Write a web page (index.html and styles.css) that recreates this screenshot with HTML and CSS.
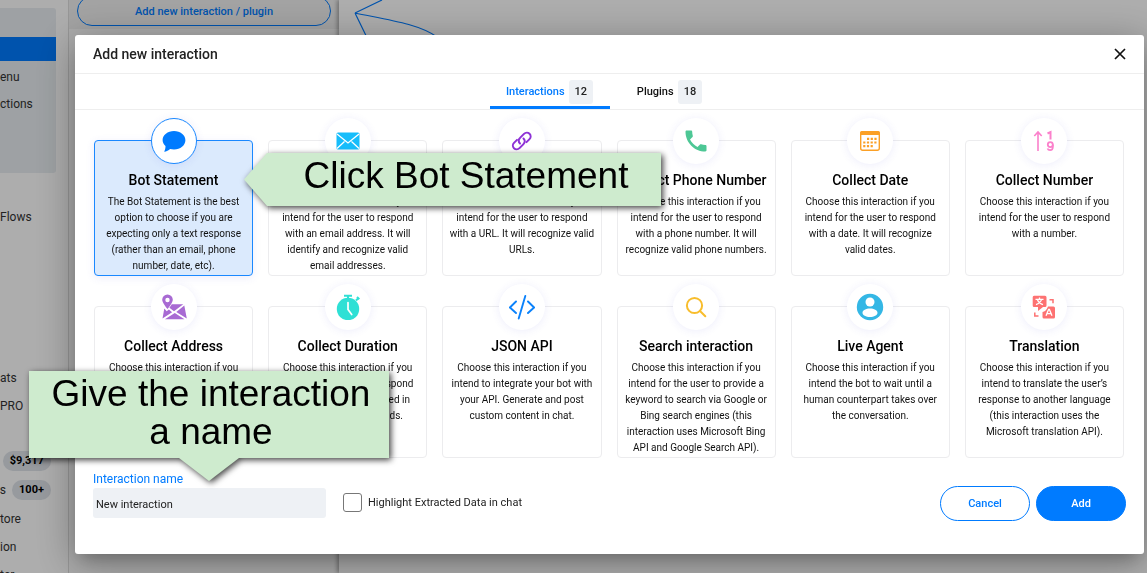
FILE: index.html
```html
<!DOCTYPE html>
<html lang="en">
<head>
<meta charset="utf-8">
<title>Add new interaction</title>
<link rel="stylesheet" href="styles.css">
</head>
<body>
<div class="app">
  <nav class="sidebar">
    <ul class="group">
      <li class="item active"></li>
      <li class="item">enu</li>
      <li class="item">ctions</li>
    </ul>
    <ul class="menu menu-flows"><li class="item">Flows</li></ul>
    <ul class="menu menu-account">
      <li class="item">ats</li>
      <li class="item">PRO</li>
    </ul>
    <ul class="menu menu-stats">
      <li class="item stat"><span class="pill">$9,317</span></li>
      <li class="item stat">s<span class="pill">100+</span></li>
      <li class="item">tore</li>
      <li class="item">ion</li>
      <li class="item">ter</li>
    </ul>
  </nav>
  <section class="panel">
    <div class="panel-head"><button class="panel-button" type="button">Add new interaction / plugin</button></div>
  </section>
  <main class="canvas">
    <svg class="links" width="120" height="60" viewBox="0 0 120 60" fill="none" stroke="#007bff" stroke-width="1.2"><path d="M16 13 43 0M16 13C50 20 80 24 98 37M16 13 34 50"/></svg>
  </main>
</div>

<div class="backdrop">
  <div class="modal" role="dialog" aria-labelledby="modal-title">
    <header class="modal-head">
      <h1 class="modal-title" id="modal-title">Add new interaction</h1>
      <button class="close" type="button" aria-label="Close"><svg width="12" height="12" viewBox="0 0 12 12" stroke="#111" stroke-width="1.7"><path d="M1 1l10 10M11 1L1 11"/></svg></button>
    </header>
    <div class="tabs" role="tablist">
      <button class="tab selected" type="button" role="tab" aria-selected="true">Interactions <span class="count">12</span></button>
      <button class="tab" type="button" role="tab" aria-selected="false">Plugins <span class="count">18</span></button>
    </div>
    <div class="cards">
      <button class="card chosen" type="button">
        <span class="bubble"><svg width="24" height="24" viewBox="0 0 24 24"><path fill="#007bff" d="M12 2C5.700 2 .6 6 .6 11c0 2.400 1.100 4.500 2.900 6.100 0 2-.4 3.900-1.300 5.600 2.300-.2 4.400-1.100 5.900-2.700 1.200.3 2.500.5 3.900.5 6.300 0 11.400-4.200 11.400-9.300S18.300 2 12 2z"/></svg></span>
        <span class="card-title">Bot Statement</span>
        <span class="card-text">The Bot Statement is the best option to choose if you are expecting only a text response (rather than an email, phone number, date, etc).</span>
      </button>
      <button class="card" type="button">
        <span class="bubble"><svg width="24" height="24" viewBox="0 0 24 24"><rect x=".5" y="3.500" width="23" height="17" rx="1.500" fill="#16bdfb"/><path d="M1 5l11 9 11-9M1 19.500l7.500-7M23 19.500l-7.500-7" fill="none" stroke="#fff" stroke-width="1.300"/></svg></span>
        <span class="card-title">Collect Email</span>
        <span class="card-text">Choose this interaction if you intend for the user to respond with an email address. It will identify and recognize valid email addresses.</span>
      </button>
      <button class="card" type="button">
        <span class="bubble"><svg width="24" height="24" viewBox="0 0 24 24" fill="none" stroke="#8e32d6" stroke-width="2" stroke-linecap="round"><path d="M10 14.500c-1.700-1.700-1.700-4 0-5.600l4-4c1.600-1.600 4-1.600 5.500-.2 1.500 1.500 1.500 3.900 0 5.400l-3 3"/><path d="M13.500 9.500c1.700 1.700 1.700 4 0 5.600l-4 4c-1.600 1.600-4 1.600-5.500.2-1.500-1.500-1.500-3.900 0-5.400l3-3"/></svg></span>
        <span class="card-title">Collect URL</span>
        <span class="card-text">Choose this interaction if you intend for the user to respond with a URL. It will recognize valid URLs.</span>
      </button>
      <button class="card" type="button">
        <span class="bubble"><svg width="24" height="24" viewBox="0 0 24 24"><path fill="#4dc795" d="M6 10.500c1.600 3.200 4.300 5.800 7.500 7.500l2.500-2.500c.3-.3.8-.4 1.200-.2 1.300.4 2.700.6 4.100.6.7 0 1.200.5 1.200 1.200v4.200c0 .7-.5 1.200-1.200 1.200C10.500 22.500 1.500 13.600 1.500 2.700c0-.7.500-1.200 1.200-1.200H7c.7 0 1.200.5 1.200 1.200 0 1.400.2 2.800.6 4.100.1.400 0 .9-.3 1.200z"/></svg></span>
        <span class="card-title">Collect Phone Number</span>
        <span class="card-text">Choose this interaction if you intend for the user to respond with a phone number. It will recognize valid phone numbers.</span>
      </button>
      <button class="card" type="button">
        <span class="bubble"><svg width="24" height="24" viewBox="0 0 24 24"><rect x="2.700" y="2.700" width="18.600" height="18.600" rx="2" fill="none" stroke="#fba026" stroke-width="1.400"/><path d="M2 6V4q0-2 2-2h16q2 0 2 2v2z" fill="#fba026"/><path d="M9 9.800h11M5.200 13.500H20M5.200 17.200h11" stroke="#fba026" stroke-width="2.200" stroke-dasharray="2.200 1.500"/></svg></span>
        <span class="card-title">Collect Date</span>
        <span class="card-text">Choose this interaction if you intend for the user to respond with a date. It will recognize valid dates.</span>
      </button>
      <button class="card" type="button">
        <span class="bubble"><svg width="24" height="24" viewBox="0 0 24 24" fill="none" stroke="#fb80cb"><path d="M6 22V3M2.300 7 6 3l3.700 4" stroke-width="1.600"/><path d="M15.500 4.500 18.500 3v7.500" stroke-width="2"/><circle cx="18.300" cy="15.600" r="2.500" stroke-width="1.800"/><path d="M20.900 15.600v2.200c0 2.200-1.200 3.400-2.800 3.400-1.300 0-2.200-.6-2.600-1.700" stroke-width="1.700"/></svg></span>
        <span class="card-title">Collect Number</span>
        <span class="card-text">Choose this interaction if you intend for the user to respond with a number.</span>
      </button>
      <button class="card" type="button">
        <span class="bubble"><svg width="26" height="26" viewBox="0 0 26 26" fill="#a86ad3"><path fill-rule="evenodd" d="M6.500.5a5.300 5.300 0 0 1 5.300 5.300c0 3.300-5.300 9.200-5.300 9.200S1.200 9.100 1.200 5.800A5.300 5.300 0 0 1 6.500.5zm0 3.300a2.200 2.200 0 1 0 0 4.400 2.200 2.200 0 0 0 0-4.400z"/><path d="M10.800 10.300h11.500l-9.300 7-4.600-3.500zM3.300 14.500l2.400 2.700 2.200-1.700 3.200 2.800-9.600 6.200zM23.300 11.500l2.500 13-10.500-6.500zM13.800 19l9.700 6.300H3.900z"/></svg></span>
        <span class="card-title">Collect Address</span>
        <span class="card-text">Choose this interaction if you intend for the user to respond with an address. It will recognize valid addresses.</span>
      </button>
      <button class="card" type="button">
        <span class="bubble"><svg width="26" height="26" viewBox="0 0 26 26"><circle cx="13" cy="15" r="11.200" fill="#2ee0d5"/><path d="M9 1.700h8M13 2v3M21 6.500l2.500-2.500M22 3l2.300 2.300" stroke="#2ee0d5" stroke-width="2"/><path d="M13 8.500v7l3.700 5" fill="none" stroke="#fff" stroke-width="1.700" stroke-linecap="round"/></svg></span>
        <span class="card-title">Collect Duration</span>
        <span class="card-text">Choose this interaction if you intend for the user to respond with a duration expressed in hours, minutes, seconds.</span>
      </button>
      <button class="card" type="button">
        <span class="bubble"><svg width="26" height="26" viewBox="0 0 26 26" fill="none" stroke="#0b82fb" stroke-width="1.900" stroke-linecap="round"><path d="M7 7.500.9 13.500 7 19M19 7.500l6.100 6L19 19M16.300 2 9.700 24.500"/></svg></span>
        <span class="card-title">JSON API</span>
        <span class="card-text">Choose this interaction if you intend to integrate your bot with your API. Generate and post custom content in chat.</span>
      </button>
      <button class="card" type="button">
        <span class="bubble"><svg width="24" height="24" viewBox="0 0 24 24" fill="none" stroke="#f8bd2c" stroke-width="2" stroke-linecap="round"><circle cx="10.500" cy="10.500" r="7.600"/><path d="M16 16l5.300 5.300"/></svg></span>
        <span class="card-title">Search interaction</span>
        <span class="card-text">Choose this interaction if you intend for the user to provide a keyword to search via Google or Bing search engines (this interaction uses Microsoft Bing API and Google Search API).</span>
      </button>
      <button class="card" type="button">
        <span class="bubble"><svg width="28" height="28" viewBox="0 0 28 28"><circle cx="14" cy="14" r="13.200" fill="#34b7e5"/><circle cx="14" cy="9" r="4.500" fill="#fff"/><path fill="#fff" d="M14 15.500c4 0 7.500 1.700 7.500 4.300S18 24 14 24s-7.500-1.600-7.500-4.200 3.500-4.300 7.500-4.300z"/></svg></span>
        <span class="card-title">Live Agent</span>
        <span class="card-text">Choose this interaction if you intend the bot to wait until a human counterpart takes over the conversation.</span>
      </button>
      <button class="card" type="button">
        <span class="bubble"><svg width="24" height="24" viewBox="0 0 24 24"><path fill="#fd7272" d="M2 .7h11q1.500 0 1.500 1.500v8.300q0 1.500-1.500 1.500h-2l-5 4v-4H2Q.7 12 .7 10.500V2.200Q.7.700 2 .7zM16 11.500h5.500q1.500 0 1.500 1.500v9q0 1.500-1.500 1.500H12q-1.500 0-1.500-1.500v-5q3.500-.5 5.500-5.500z"/><path d="M3.500 4.400h8M7.500 2.500v2M4 9.600c3-1 4.700-2.700 5.500-5M11 9.600C8.500 9 6.400 7.200 5.500 4.800" fill="none" stroke="#fff" stroke-width="1.300"/><path d="M14 20.700l2.600-6.200h.8l2.600 6.200M15 18.700h4" fill="none" stroke="#fff" stroke-width="1.300"/><path d="M17.500 4.700H21v3.500M2.800 17.500v3.500h3.700" fill="none" stroke="#fd7272" stroke-width="1.500"/></svg></span>
        <span class="card-title">Translation</span>
        <span class="card-text">Choose this interaction if you intend to translate the user’s response to another language (this interaction uses the Microsoft translation API).</span>
      </button>
    </div>
    <form class="modal-foot">
      <div class="field">
        <label class="field-label" for="name">Interaction name</label>
        <input class="field-input" id="name" type="text" value="New interaction">
      </div>
      <label class="check"><input class="check-box" type="checkbox">Highlight Extracted Data in chat</label>
      <div class="actions">
        <button class="btn btn-outline" type="button">Cancel</button>
        <button class="btn btn-solid" type="button">Add</button>
      </div>
    </form>
  </div>
</div>

<div class="callout callout-left">Click Bot Statement</div>
<div class="callout callout-down">Give the interaction a name</div>
</body>
</html>
```
FILE: styles.css
```css
* { box-sizing: border-box; }
body { margin: 0; height: 100vh; overflow: hidden; font-family: Roboto, sans-serif; font-size: 11px; color: #111; background: #fff; }
button, input { font: inherit; color: inherit; }
svg { display: block; }

.app { display: flex; height: 100vh; }
.sidebar { width: 69px; flex: none; padding-top: 8px; border-right: 1px solid #dedede; overflow: hidden; }
.group, .menu { list-style: none; margin: 0; padding: 0; }
.item { height: 28px; display: flex; align-items: center; font-size: 12px; color: #333; }
.group { width: 56px; height: 165px; padding-top: 29px; background: #e9eef2; border-radius: 0 3px 3px 0; }
.group .item { height: 27px; }
.group .active { height: 24px; background: #007bff; margin-bottom: 2px; }
.menu-flows { padding-top: 30px; }
.menu-account { padding-top: 133px; }
.menu-stats { padding-top: 27px; }
.stat { justify-content: flex-end; gap: 6px; width: 51px; }
.stat + .stat { height: 30px; }
.pill { padding: 0 7px; line-height: 20px; border-radius: 10px; background: #dfe3e9; font-size: 11px; font-weight: 700; color: #000; }

.panel { width: 270px; flex: none; background: #fcfcfc; }
.panel-head { height: 29px; padding: 0 8px; display: flex; align-items: flex-end; background: #f0f0f0; }
.panel-button { width: 100%; height: 30px; margin-bottom: 3px; flex: none; border: 1px solid #007bff; border-radius: 15px; background: none; color: #007bff; font-weight: 500; }
.canvas { flex: 1; background: #fff; box-shadow: -2px 0 4px rgba(0, 0, 0, .3); }

.backdrop { position: fixed; inset: 0; padding: 35px 3px 20px 75px; background: rgba(0, 0, 0, .32); }
.modal { background: #fff; border-radius: 3px; box-shadow: 0 11px 15px -7px rgba(0, 0, 0, .2), 0 8px 38px 3px rgba(0, 0, 0, .3); }
.modal-head { height: 39px; padding: 0 18px; display: flex; align-items: center; justify-content: space-between; border-bottom: 1px solid #eee; }
.modal-title { margin: 0; font-size: 14px; font-weight: 500; color: #222; }
.close { border: 0; padding: 0; background: none; }
.tabs { height: 36px; display: flex; justify-content: center; border-bottom: 1px solid #eee; }
.tab { width: 120px; padding: 3px 0 0; border: 0; border-bottom: 3px solid transparent; background: none; display: flex; align-items: center; justify-content: center; gap: 4px; font-weight: 500; }
.tab.selected { border-color: #007bff; color: #007bff; }
.count { padding: 0 6px; line-height: 24px; border-radius: 3px; background: #eef1f5; color: #222; }

.cards { padding: 30px 20px 0 19px; display: grid; grid-template-columns: repeat(6, 1fr); gap: 30px 15px; }
.card { min-width: 0; padding: 0 6px 1px; border: 1px solid #ececee; border-radius: 4px; background: #fff; display: flex; flex-direction: column; align-items: center; justify-content: flex-start; }
.card.chosen { border-color: #1a88ff; background: #dbeafd; box-shadow: 0 2px 8px rgba(80, 80, 220, .1); }
.bubble { width: 46px; height: 46px; flex: none; margin-top: -23px; border-radius: 50%; background: #fff; display: grid; place-items: center; box-shadow: 0 1px 8px rgba(80, 80, 220, .1); }
.chosen .bubble { border: 1px solid #1a88ff; }
.card-title { margin: 6px 0 4px; font-size: 14px; line-height: 20px; font-weight: 500; white-space: nowrap; color: #000; }
.card-text { font-size: 10px; line-height: 16px; }

.modal-foot { padding: 13px 18px 33px; display: flex; align-items: flex-end; }
.field { width: 233px; padding-bottom: 3px; display: flex; flex-direction: column; }
.field-label { margin-bottom: 1px; font-size: 12px; line-height: 16px; color: #007bff; }
.field-input { height: 30px; padding: 2px 3px 0; border: 0; border-radius: 3px; background: #eef1f5; width: 100%; color: #222; }
.check { height: 38px; margin-left: 17px; display: flex; align-items: center; gap: 6px; color: #222; }
.check-box { appearance: none; width: 19px; height: 19px; margin: 0; border: 1px solid #777; border-radius: 3px; background: #fff; }
.actions { margin-left: auto; display: flex; gap: 6px; }
.btn { width: 90px; height: 35px; border: 1px solid #007bff; border-radius: 18px; font-weight: 500; }
.btn-outline { background: #fff; color: #007bff; }
.btn-solid { background: #007bff; color: #fff; }

/* Guide callouts floating over the dialog */
.callout { position: absolute; background: #ceebce; color: #000; font: 37px/38px "Liberation Sans", Arial, sans-serif; text-align: center; filter: drop-shadow(2px 2px 3px rgba(0, 0, 0, .75)); }
.callout-left { left: 244px; top: 153px; width: 417px; height: 53px; padding: 4px 0 0 27px; background: none; }
.callout-left::before { content: ""; position: absolute; inset: 0; z-index: -1; background: #ceebce; clip-path: polygon(0 50%, 23px 0, 100% 0, 100% 100%, 23px 100%); }
.callout-down { left: 29px; top: 371px; width: 360px; height: 87px; padding: 4px 8px 0 12px; }
.callout-down::after { content: ""; position: absolute; left: 150px; top: 100%; width: 60px; height: 23px; background: #ceebce; clip-path: polygon(0 0, 100% 0, 50% 100%); }
```
